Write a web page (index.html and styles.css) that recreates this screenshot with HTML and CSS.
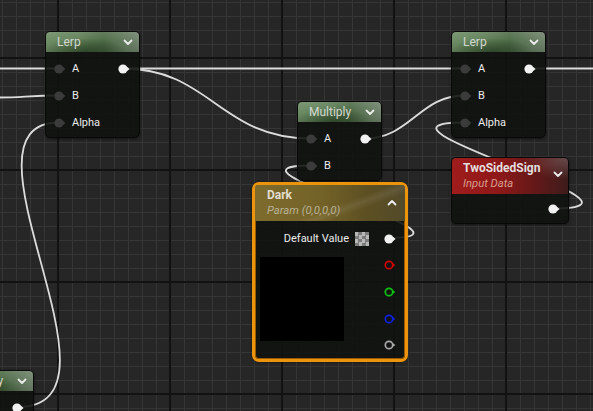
FILE: index.html
```html
<!DOCTYPE html>
<html>
<head>
<meta charset="utf-8">
<link rel="stylesheet" href="styles.css">
</head>
<body>
<div class="canvas">
  <svg class="wires" width="593" height="411" viewBox="0 0 593 411">
    <g fill="none" stroke="#dcdcdc" stroke-width="1.8">
      <path d="M0 68.5 L59 68.5"/>
      <path d="M0 97.5 C22 97.5 30 95.5 59 95.5"/>
      <path d="M18 407 C140 407 -55 122.5 59 122.5"/>
      <path d="M123 68.5 C210 68.5 220 138.5 311 138.5"/>
      <path d="M123 68.5 L464 68.5"/>
      <path d="M365 138.5 C410 138.5 420 95.5 464 95.5"/>
      <path d="M388 238 C500 238 200 165.5 311 165.5"/>
      <path d="M528 68.5 L593 68.5"/>
      <path d="M553 208.5 C680 208.5 340 122.5 464 122.5"/>
    </g>
  </svg>

  <!-- Lerp 1 -->
  <div class="node n-lerp1">
    <div class="hdr green">
      <span class="title">Lerp</span>
      <svg class="chev" width="10" height="7" viewBox="0 0 10 7"><path d="M1.5 1.5 L5 5 L8.5 1.5"/></svg>
    </div>
    <div class="body rows">
      <div class="row">
        <svg class="pin" width="13" height="10" viewBox="0 0 13 10"><circle cx="5" cy="5" r="4.6" class="in"/><path d="M8.8 2.8 L11.4 5 L8.8 7.2Z" class="in"/></svg>
        <span class="lbl">A</span>
        <svg class="pin out-pin" width="13" height="10" viewBox="0 0 13 10"><circle cx="5" cy="5" r="4.6" class="out"/><path d="M8.8 2.8 L11.6 5 L8.8 7.2Z" class="out"/></svg>
      </div>
      <div class="row">
        <svg class="pin" width="13" height="10" viewBox="0 0 13 10"><circle cx="5" cy="5" r="4.6" class="in"/><path d="M8.8 2.8 L11.4 5 L8.8 7.2Z" class="in"/></svg>
        <span class="lbl">B</span>
      </div>
      <div class="row">
        <svg class="pin" width="13" height="10" viewBox="0 0 13 10"><circle cx="5" cy="5" r="4.6" class="in"/><path d="M8.8 2.8 L11.4 5 L8.8 7.2Z" class="in"/></svg>
        <span class="lbl">Alpha</span>
      </div>
    </div>
  </div>

  <!-- Lerp 2 -->
  <div class="node n-lerp2">
    <div class="hdr green">
      <span class="title">Lerp</span>
      <svg class="chev" width="10" height="7" viewBox="0 0 10 7"><path d="M1.5 1.5 L5 5 L8.5 1.5"/></svg>
    </div>
    <div class="body rows">
      <div class="row">
        <svg class="pin" width="13" height="10" viewBox="0 0 13 10"><circle cx="5" cy="5" r="4.6" class="in"/><path d="M8.8 2.8 L11.4 5 L8.8 7.2Z" class="in"/></svg>
        <span class="lbl">A</span>
        <svg class="pin out-pin" width="13" height="10" viewBox="0 0 13 10"><circle cx="5" cy="5" r="4.6" class="out"/><path d="M8.8 2.8 L11.6 5 L8.8 7.2Z" class="out"/></svg>
      </div>
      <div class="row">
        <svg class="pin" width="13" height="10" viewBox="0 0 13 10"><circle cx="5" cy="5" r="4.6" class="in"/><path d="M8.8 2.8 L11.4 5 L8.8 7.2Z" class="in"/></svg>
        <span class="lbl">B</span>
      </div>
      <div class="row">
        <svg class="pin" width="13" height="10" viewBox="0 0 13 10"><circle cx="5" cy="5" r="4.6" class="in"/><path d="M8.8 2.8 L11.4 5 L8.8 7.2Z" class="in"/></svg>
        <span class="lbl">Alpha</span>
      </div>
    </div>
  </div>

  <!-- Multiply -->
  <div class="node n-mul">
    <div class="hdr green">
      <span class="title">Multiply</span>
      <svg class="chev" width="10" height="7" viewBox="0 0 10 7"><path d="M1.5 1.5 L5 5 L8.5 1.5"/></svg>
    </div>
    <div class="body rows">
      <div class="row">
        <svg class="pin" width="13" height="10" viewBox="0 0 13 10"><circle cx="5" cy="5" r="4.6" class="in"/><path d="M8.8 2.8 L11.4 5 L8.8 7.2Z" class="in"/></svg>
        <span class="lbl">A</span>
        <svg class="pin out-pin" width="13" height="10" viewBox="0 0 13 10"><circle cx="5" cy="5" r="4.6" class="out"/><path d="M8.8 2.8 L11.6 5 L8.8 7.2Z" class="out"/></svg>
      </div>
      <div class="row">
        <svg class="pin" width="13" height="10" viewBox="0 0 13 10"><circle cx="5" cy="5" r="4.6" class="in"/><path d="M8.8 2.8 L11.4 5 L8.8 7.2Z" class="in"/></svg>
        <span class="lbl">B</span>
      </div>
    </div>
  </div>

  <!-- Multiply (partially off-screen, bottom left) -->
  <div class="node n-mul2">
    <div class="hdr green">
      <span class="title">Multiply</span>
      <svg class="chev" width="10" height="7" viewBox="0 0 10 7"><path d="M1.5 1.5 L5 5 L8.5 1.5"/></svg>
    </div>
    <div class="body rows">
      <div class="row">
        <svg class="pin" width="13" height="10" viewBox="0 0 13 10"><circle cx="5" cy="5" r="4.6" class="in"/><path d="M8.8 2.8 L11.4 5 L8.8 7.2Z" class="in"/></svg>
        <svg class="pin out-pin" width="13" height="10" viewBox="0 0 13 10"><circle cx="5" cy="5" r="4.6" class="out"/><path d="M8.8 2.8 L11.6 5 L8.8 7.2Z" class="out"/></svg>
      </div>
    </div>
  </div>

  <!-- TwoSidedSign -->
  <div class="node n-tss">
    <div class="hdr red tall">
      <div class="titles">
        <span class="title bold">TwoSidedSign</span>
        <span class="sub sub-red">Input Data</span>
      </div>
      <svg class="chev chev-low" width="10" height="7" viewBox="0 0 10 7"><path d="M1.5 1.5 L5 5 L8.5 1.5"/></svg>
    </div>
    <div class="body single">
      <svg class="pin" width="13" height="10" viewBox="0 0 13 10"><circle cx="5" cy="5" r="4.6" class="out"/><path d="M8.8 2.8 L11.6 5 L8.8 7.2Z" class="out"/></svg>
    </div>
  </div>

  <!-- Dark (selected) -->
  <div class="node n-dark">
    <div class="hdr gold tall">
      <div class="titles">
        <span class="title bold">Dark</span>
        <span class="sub sub-gold">Param (0,0,0,0)</span>
      </div>
      <svg class="chev" width="10" height="7" viewBox="0 0 10 7"><path d="M1.5 5.5 L5 2 L8.5 5.5"/></svg>
    </div>
    <div class="body dark-body">
      <div class="dv-row">
        <span class="lbl">Default Value</span>
        <span class="checker"></span>
        <svg class="pin" width="13" height="10" viewBox="0 0 13 10"><circle cx="5" cy="5" r="4.6" class="out"/><path d="M8.8 2.8 L11.6 5 L8.8 7.2Z" class="out"/></svg>
      </div>
      <div class="preview-row">
        <div class="preview"></div>
        <div class="rgba">
          <div class="rrow"><svg class="pin" width="13" height="10" viewBox="0 0 13 10"><circle cx="5" cy="5" r="3.7" fill="none" stroke="#d00000" stroke-width="1.7"/><path d="M9 3.2 L11.4 5 L9 6.8Z" fill="#d00000"/></svg></div>
          <div class="rrow"><svg class="pin" width="13" height="10" viewBox="0 0 13 10"><circle cx="5" cy="5" r="3.7" fill="none" stroke="#10c010" stroke-width="1.7"/><path d="M9 3.2 L11.4 5 L9 6.8Z" fill="#10c010"/></svg></div>
          <div class="rrow"><svg class="pin" width="13" height="10" viewBox="0 0 13 10"><circle cx="5" cy="5" r="3.7" fill="none" stroke="#1020e0" stroke-width="1.7"/><path d="M9 3.2 L11.4 5 L9 6.8Z" fill="#1020e0"/></svg></div>
          <div class="rrow"><svg class="pin" width="13" height="10" viewBox="0 0 13 10"><circle cx="5" cy="5" r="3.7" fill="none" stroke="#a8a8a8" stroke-width="1.7"/><path d="M9 3.2 L11.4 5 L9 6.8Z" fill="#a8a8a8"/></svg></div>
        </div>
      </div>
    </div>
  </div>
</div>
</body>
</html>
```

FILE: styles.css
```css
html, body {
  margin: 0;
  padding: 0;
  background: #262626;
}

.canvas {
  position: relative;
  width: 593px;
  height: 411px;
  overflow: hidden;
  font-family: Roboto, "Liberation Sans", sans-serif;
  background-color: #262626;
  background-image:
    linear-gradient(to right, #121212 2px, transparent 2px),
    linear-gradient(to bottom, #121212 2px, transparent 2px),
    linear-gradient(to right, #353535 1px, transparent 1px),
    linear-gradient(to bottom, #353535 1px, transparent 1px);
  background-size: 112px 100%, 100% 112px, 14px 100%, 100% 14px;
  background-position: 57px 0, 0 57px, 2px 0, 0 2px;
}

.wires {
  position: absolute;
  left: 0;
  top: 0;
}

.node {
  position: absolute;
  box-sizing: border-box;
  border: 1px solid #080808;
  border-radius: 5px;
  background: rgba(17, 19, 17, 0.9);
  box-shadow: 0 1px 3px rgba(0, 0, 0, 0.5);
}

.n-lerp1 { left: 45px; top: 31px; width: 95px; }
.n-lerp2 { left: 451px; top: 31px; width: 95px; }
.n-mul   { left: 297px; top: 101px; width: 85px; }
.n-mul2  { left: -51px; top: 370px; width: 85px; }
.n-tss   { left: 451px; top: 157px; width: 118px; }
.n-dark  {
  left: 252px;
  top: 182px;
  width: 156px;
  border: 3px solid #ec940c;
  border-radius: 7px;
  box-shadow: inset 0 0 0 1px #9a5a00, 0 0 2px rgba(0, 0, 0, 0.6);
}

.hdr {
  display: flex;
  align-items: center;
  justify-content: space-between;
  height: 20px;
  padding: 0 6px 0 11px;
  border-radius: 4px 4px 0 0;
}

.hdr.tall {
  height: 36px;
  align-items: flex-start;
}

.green {
  background:
    radial-gradient(ellipse 45% 70% at 42% 100%, rgba(25, 45, 22, 0.6), rgba(25, 45, 22, 0) 100%),
    linear-gradient(180deg, rgba(255, 255, 255, 0.12) 0%, rgba(255, 255, 255, 0) 55%, rgba(0, 0, 0, 0.12) 100%),
    linear-gradient(90deg, #6b8b63 0%, #5f7f57 35%, #4c6a45 62%, #6f826b 100%);
}

.red {
  background:
    radial-gradient(ellipse 40% 60% at 100% 0%, rgba(150, 130, 130, 0.45), rgba(150, 130, 130, 0) 100%),
    linear-gradient(90deg, #a01c1c 0%, #8e1818 40%, #641818 72%, #3e1c1c 100%);
}

.gold {
  background:
    linear-gradient(160deg, rgba(255, 255, 255, 0) 55%, rgba(255, 255, 255, 0.08) 62%, rgba(255, 255, 255, 0) 70%),
    linear-gradient(90deg, #7e6c2e 0%, #736227 45%, #5c4f22 75%, #534a2a 100%);
  padding-left: 12px;
  padding-right: 8px;
  border-radius: 3px 3px 0 0;
  height: 35px;
}

.titles {
  display: flex;
  flex-direction: column;
  padding-top: 2px;
}

.title {
  font-size: 12px;
  line-height: 16px;
  color: #d2d8cf;
  white-space: nowrap;
}

.title.bold {
  font-weight: bold;
  color: #e4dede;
}

.n-dark .title.bold { color: #e2ddd0; }

.sub {
  font-size: 11.3px;
  font-style: italic;
  line-height: 15px;
  white-space: nowrap;
}

.sub-red { color: #d99c8c; }
.sub-gold { color: #b9b296; }

.chev path {
  fill: none;
  stroke: #ececec;
  stroke-width: 1.8;
  stroke-linecap: round;
  stroke-linejoin: round;
}

.hdr.tall .chev { margin-top: 13px; }
.n-tss .hdr { padding-right: 5px; }
.n-dark .hdr .chev { margin-top: 14px; }

.pin { display: block; flex: none; }
.pin .in { fill: #3a3b3a; }
.pin .out { fill: #f2f2f2; }

.rows {
  padding: 3px 8px 1px 8px;
  border-radius: 0 0 4px 4px;
}

.row {
  display: flex;
  align-items: center;
  height: 27px;
}

.lbl {
  font-size: 11px;
  color: #ececec;
  margin-left: 5px;
  white-space: nowrap;
}

.out-pin { margin-left: auto; }

.single {
  display: flex;
  justify-content: flex-end;
  align-items: center;
  height: 29px;
  padding-right: 7px;
}

.dark-body {
  padding: 4px 8px 0 5px;
}

.dv-row {
  display: flex;
  align-items: center;
  justify-content: flex-end;
  height: 27px;
}

.dv-row .lbl { margin-right: 6px; }

.checker {
  width: 14px;
  height: 14px;
  margin-right: 15px;
  background-color: #b4b4b4;
  background-image: repeating-conic-gradient(#7c7c7c 0 25%, #b8b8b8 0 50%);
  background-size: 7px 7px;
}

.preview-row {
  display: flex;
  justify-content: space-between;
  align-items: flex-start;
}

.preview {
  width: 84px;
  height: 84px;
  margin-top: 5px;
  background: #000;
}

.rgba {
  display: flex;
  flex-direction: column;
}

.rrow {
  display: flex;
  align-items: center;
  height: 26.7px;
}
```
